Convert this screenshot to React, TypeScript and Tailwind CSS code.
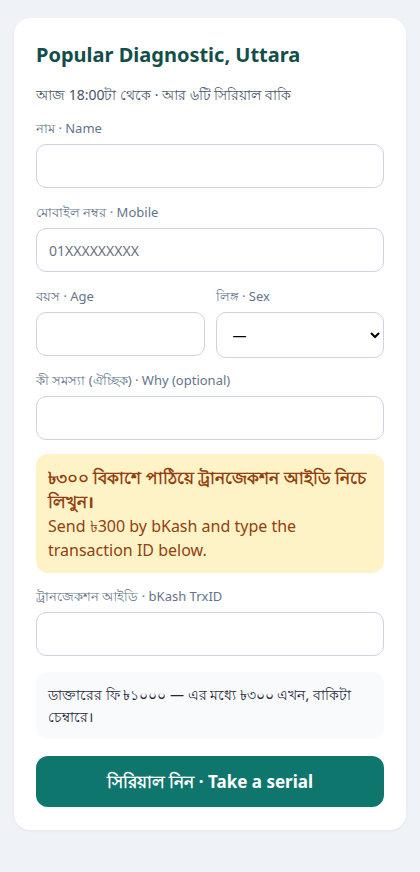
import { useState } from 'react';

function Field({ label, className, children }: { label: string; className?: string; children: React.ReactNode }) {
  return (
    <div className={'flex flex-col ' + (className ?? '')}>
      <label className="mb-[7px] text-[13px] leading-[18px] text-[#64748b]">{label}</label>
      {children}
    </div>
  );
}

const inputCls =
  'h-[44px] w-full rounded-[10px] border border-[#cbd5e1] bg-white px-3 text-[14px] text-[#0f172a] outline-none placeholder:text-[#6b7280]';

export default function App() {
  const [sex, setSex] = useState('');

  return (
    <div className="min-h-[872px] bg-[#eff3f8] px-[14px] pt-[18px] font-['Noto_Sans',sans-serif]">
      <div className="rounded-[16px] bg-white px-[22px] pb-[23px] pt-[23px] shadow-[0_1px_3px_rgba(15,23,42,0.06)]">
        <h1 className="text-[20px] font-bold leading-[28px] text-[#134e4a]">Popular Diagnostic, Uttara</h1>
        <p className="mt-[16px] text-[14px] leading-[20px] text-[#475569]">
          আজ 18:00টা থেকে · আর ৬টি সিরিয়াল বাকি
        </p>

        <div className="mt-[14px] flex flex-col gap-[15px]">
          <Field label="নাম · Name">
            <input className={inputCls} />
          </Field>
          <Field label="মোবাইল নম্বর · Mobile">
            <input className={inputCls} placeholder="01XXXXXXXXX" />
          </Field>
          <div className="grid grid-cols-2 gap-[11px]">
            <Field label="বয়স · Age">
              <input className={inputCls} />
            </Field>
            <Field label="লিঙ্গ · Sex">
              <select
                value={sex}
                onChange={(e) => setSex(e.target.value)}
                className="h-[46px] w-full rounded-[10px] border border-[#cbd5e1] bg-white px-3 text-[14px] text-black"
              >
                <option value="">—</option>
                <option value="m">পুরুষ · Male</option>
                <option value="f">মহিলা · Female</option>
              </select>
            </Field>
          </div>
          <Field label="কী সমস্যা (ঐচ্ছিক) · Why (optional)" className="-mt-[2px]">
            <input className={inputCls} />
          </Field>

          <div className="-mt-[1px] rounded-[12px] bg-[#fef3c7] px-[12px] pb-[11px] pt-[12px] text-[16px] leading-[24px] text-[#92400e]">
            <p className="text-[17px] font-bold">৳৩০০ বিকাশে পাঠিয়ে ট্রানজেকশন আইডি নিচে লিখুন।</p>
            <p>Send ৳300 by bKash and type the transaction ID below.</p>
          </div>

          <Field label="ট্রানজেকশন আইডি · bKash TrxID" className="-mt-[1px]">
            <input className={inputCls} />
          </Field>

          <div className="mt-[1px] rounded-[12px] bg-[#f8fafc] px-[12px] pb-[11px] pt-[12px] text-[14px] leading-[22px] text-[#1e293b]">
            ডাক্তারের ফি ৳১০০০ — এর মধ্যে ৳৩০০ এখন, বাকিটা চেম্বারে।
          </div>

          <button className="mt-[2px] h-[51px] w-full rounded-[12px] bg-[#0f766e] text-[17px] font-bold text-white">
            সিরিয়াল নিন · Take a serial
          </button>
        </div>
      </div>
    </div>
  );
}
